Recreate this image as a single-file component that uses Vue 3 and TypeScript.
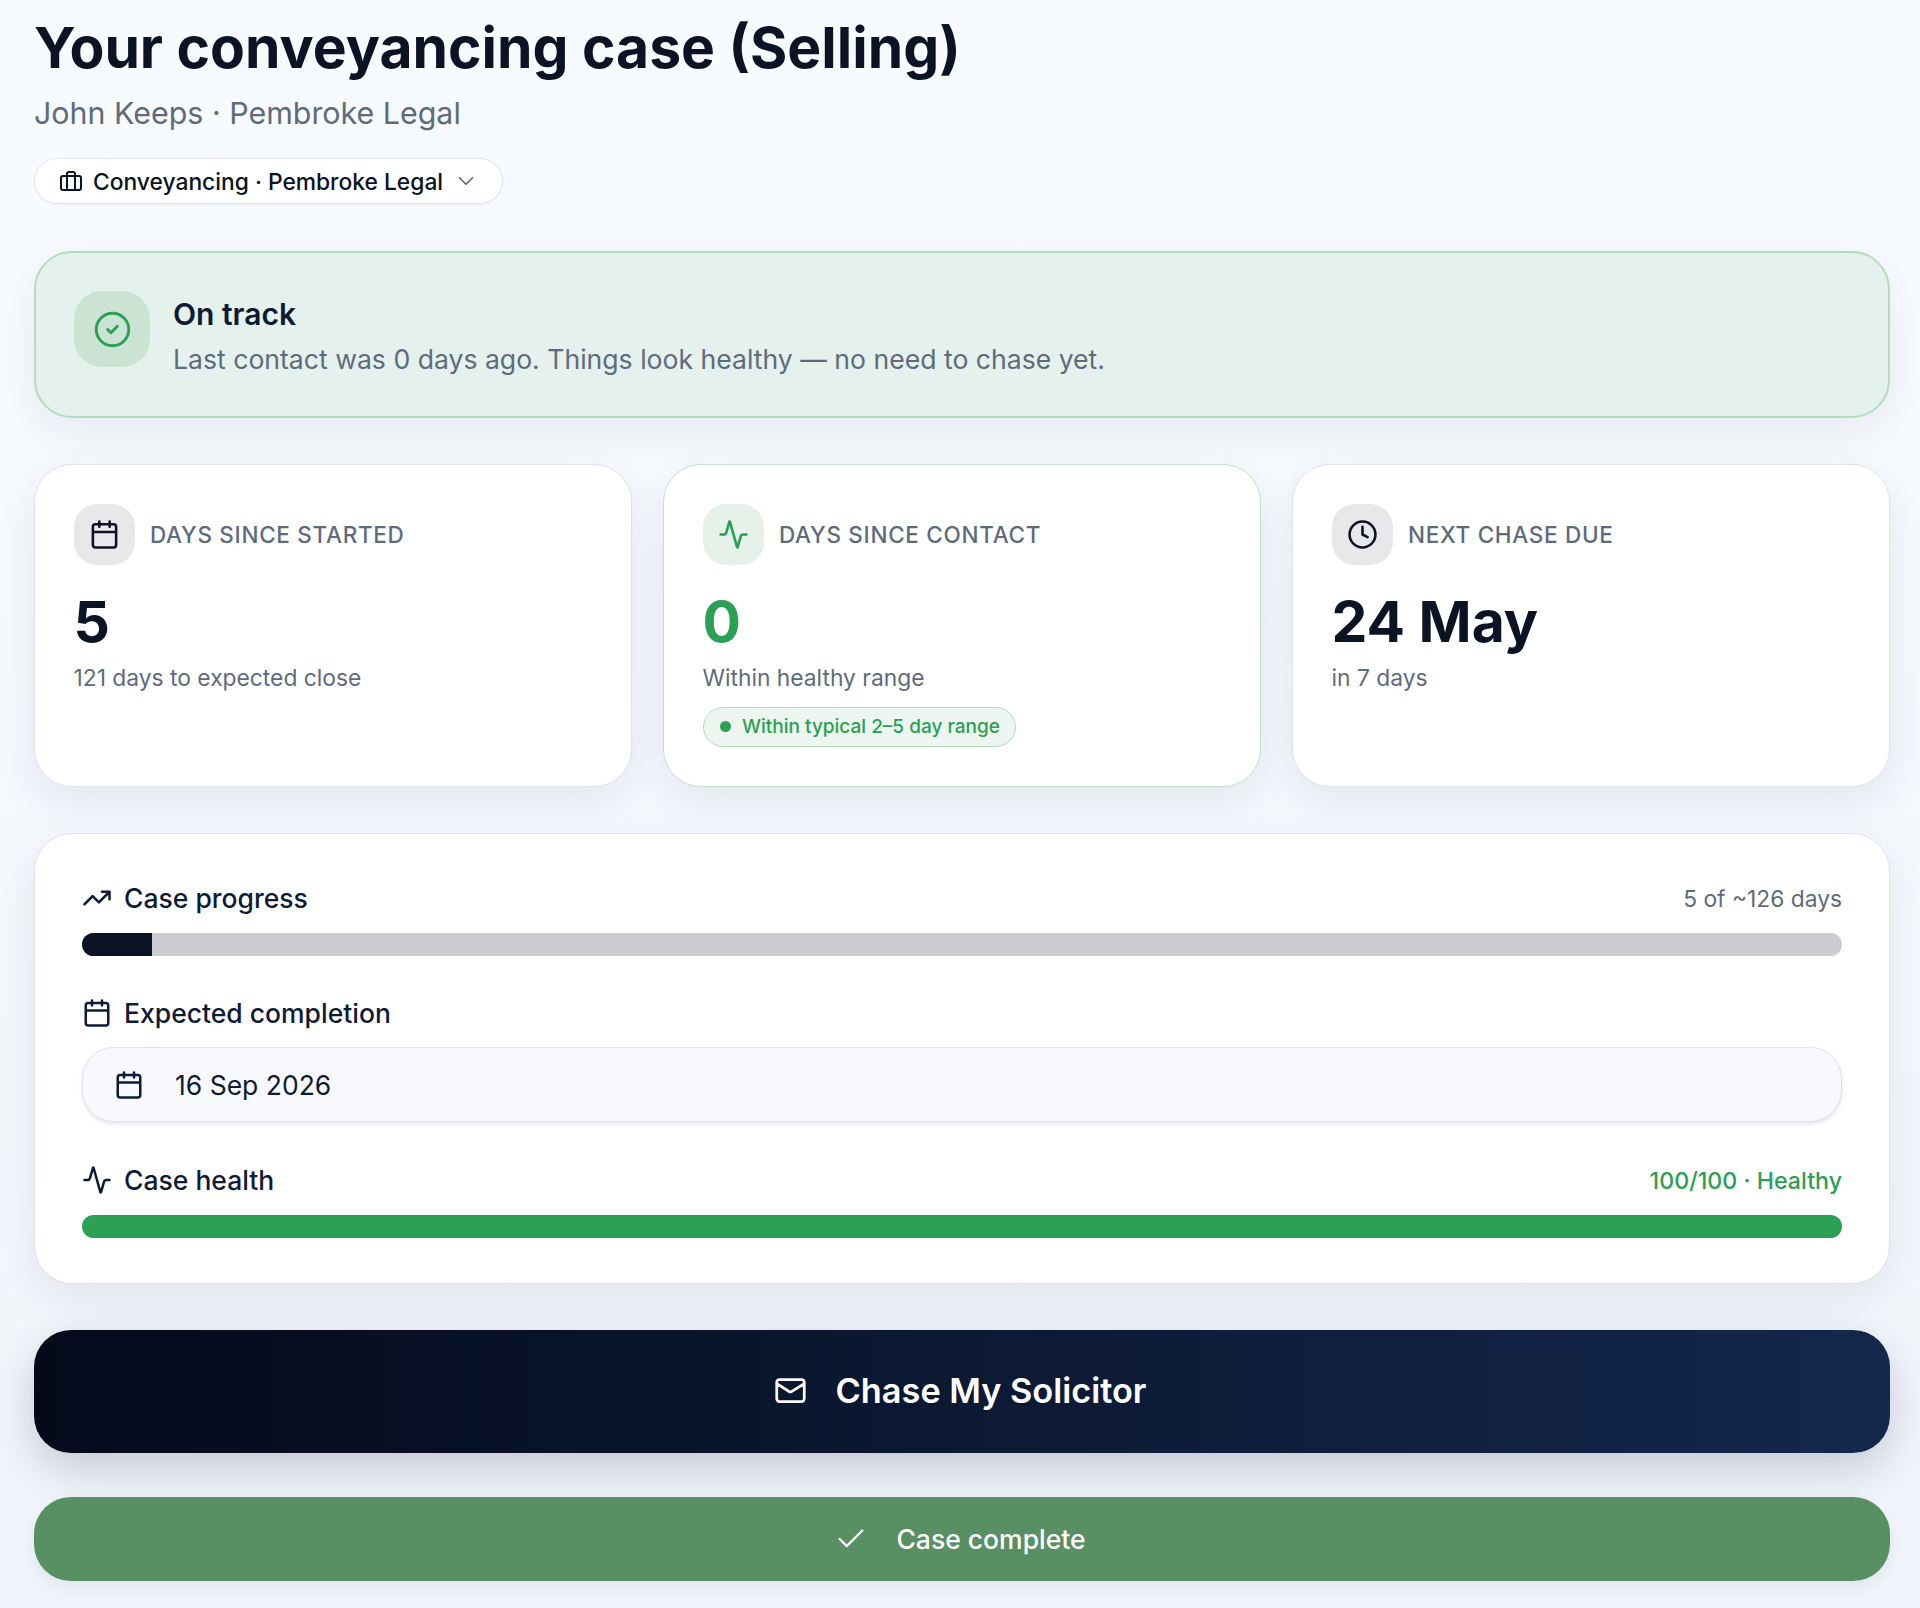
<template>
  <main class="page">
    <header class="head">
      <h1>Your conveyancing case (Selling)</h1>
      <p class="sub">John Keeps · Pembroke Legal</p>
      <button class="chip">
        <svg class="ico chip-ico" viewBox="0 0 24 24"><path :d="icons.briefcase" /></svg>
        <span>Conveyancing · Pembroke Legal</span>
        <svg class="ico chev" viewBox="0 0 24 24"><path :d="icons.chevron" /></svg>
      </button>
    </header>

    <section class="banner">
      <div class="banner-ico">
        <svg class="ico" viewBox="0 0 24 24"><path :d="icons.circleCheck" /></svg>
      </div>
      <div class="banner-body">
        <div class="banner-title">On track</div>
        <div class="banner-text">Last contact was 0 days ago. Things look healthy — no need to chase yet.</div>
      </div>
    </section>

    <section class="cards">
      <div v-for="card in cards" :key="card.label" class="card" :class="{ good: card.good }">
        <div class="card-top">
          <div class="card-ico">
            <svg class="ico" viewBox="0 0 24 24"><path :d="card.icon" /></svg>
          </div>
          <span class="card-label">{{ card.label }}</span>
        </div>
        <div class="card-value">{{ card.value }}</div>
        <div class="card-sub">{{ card.sub }}</div>
        <div v-if="card.pill" class="pill"><i class="dot"></i>{{ card.pill }}</div>
      </div>
    </section>

    <section class="panel">
      <div class="row">
        <span class="row-title"><svg class="ico" viewBox="0 0 24 24"><path :d="icons.trending" /></svg>Case progress</span>
        <span class="row-note">5 of ~126 days</span>
      </div>
      <div class="bar"><div class="bar-fill" :style="{ width: progress + '%' }"></div></div>

      <div class="row row-gap">
        <span class="row-title"><svg class="ico" viewBox="0 0 24 24"><path :d="icons.calendar" /></svg>Expected completion</span>
      </div>
      <div class="date">
        <svg class="ico" viewBox="0 0 24 24"><path :d="icons.calendar" /></svg>
        <span>16 Sep 2026</span>
      </div>

      <div class="row row-gap2">
        <span class="row-title"><svg class="ico" viewBox="0 0 24 24"><path :d="icons.activity" /></svg>Case health</span>
        <span class="row-note healthy">100/100 · Healthy</span>
      </div>
      <div class="bar"><div class="bar-fill green" style="width: 100%"></div></div>
    </section>

    <button class="btn-chase">
      <svg class="ico" viewBox="0 0 24 24"><path :d="icons.mail" /></svg>
      Chase My Solicitor
    </button>
    <button class="btn-done">
      <svg class="ico" viewBox="0 0 24 24"><path :d="icons.check" /></svg>
      Case complete
    </button>
  </main>
</template>

<script setup lang="ts">
const icons = {
  briefcase: 'M4 7h16a2 2 0 0 1 2 2v10a2 2 0 0 1-2 2H4a2 2 0 0 1-2-2V9a2 2 0 0 1 2-2zM16 21V5a2 2 0 0 0-2-2h-4a2 2 0 0 0-2 2v16',
  chevron: 'm6 9 6 6 6-6',
  circleCheck: 'M22 12a10 10 0 1 1-20 0 10 10 0 0 1 20 0zM9 12l2 2 4-4',
  calendar: 'M8 2v4M16 2v4M5 4h14a2 2 0 0 1 2 2v14a2 2 0 0 1-2 2H5a2 2 0 0 1-2-2V6a2 2 0 0 1 2-2zM3 10h18',
  activity: 'M22 12h-2.48a2 2 0 0 0-1.93 1.46l-2.35 8.36a.25.25 0 0 1-.48 0L9.24 2.18a.25.25 0 0 0-.48 0l-2.35 8.36A2 2 0 0 1 4.49 12H2',
  clock: 'M22 12a10 10 0 1 1-20 0 10 10 0 0 1 20 0zM12 6v6l4 2',
  trending: 'M22 7l-8.5 8.5-5-5L2 17M16 7h6v6',
  mail: 'M4 4h16a2 2 0 0 1 2 2v12a2 2 0 0 1-2 2H4a2 2 0 0 1-2-2V6a2 2 0 0 1 2-2zM22 7l-8.97 5.7a1.94 1.94 0 0 1-2.06 0L2 7',
  check: 'M20 6 9 17l-5-5',
}

const progress = 4

const cards = [
  { label: 'DAYS SINCE STARTED', value: '5', sub: '121 days to expected close', icon: icons.calendar, good: false, pill: '' },
  { label: 'DAYS SINCE CONTACT', value: '0', sub: 'Within healthy range', icon: icons.activity, good: true, pill: 'Within typical 2–5 day range' },
  { label: 'NEXT CHASE DUE', value: '24 May', sub: 'in 7 days', icon: icons.clock, good: false, pill: '' },
]
</script>

<style scoped>
.page {
  box-sizing: border-box;
  width: 1920px;
  height: 1608px;
  padding: 15px 30px 0 34px;
  display: flex;
  flex-direction: column;
  font-family: Inter, "Liberation Sans", sans-serif;
  color: #0b1325;
  background: linear-gradient(180deg, #f8fbfe 0%, #f1f4fa 100%);
}

.ico {
  fill: none;
  stroke: currentColor;
  stroke-width: 2;
  stroke-linecap: round;
  stroke-linejoin: round;
  flex: none;
}

.head h1 {
  margin: 0;
  font-size: 57px;
  line-height: 66px;
  font-weight: 700;
}
.sub {
  margin: 12px 0 0;
  font-size: 30.4px;
  line-height: 40px;
  color: #5f6b7d;
}
.chip {
  box-sizing: border-box;
  margin-top: 25px;
  height: 46px;
  width: 469px;
  padding: 0 24px;
  display: flex;
  align-items: center;
  border: 1.5px solid #e1e5ec;
  border-radius: 23px;
  background: #fff;
  box-shadow: 0 1px 2px rgba(20, 30, 60, 0.05);
  font-family: inherit;
  font-size: 22.8px;
  font-weight: 500;
  color: #0b1325;
  white-space: nowrap;
}
.chip-ico { width: 24px; height: 24px; margin-right: 10px; }
.chev { width: 26px; height: 26px; margin-left: 10px; stroke-width: 1.6; color: #5f6b7d; }

.banner {
  box-sizing: border-box;
  margin-top: 47px;
  height: 167px;
  padding: 38px 38px 0;
  display: flex;
  align-items: flex-start;
  gap: 23px;
  border: 2px solid #b6dcbf;
  border-radius: 38px;
  background: #e5f1ec;
  box-shadow: 0 14px 40px rgba(30, 45, 80, 0.07);
}
.banner-ico {
  width: 76px;
  height: 76px;
  border-radius: 28px;
  background: #cae3d2;
  color: #2b9f54;
  display: flex;
  align-items: center;
  justify-content: center;
}
.banner-ico svg { width: 39px; height: 39px; stroke-width: 1.8; }
.banner-body { padding-top: 3px; }
.banner-title { font-size: 30px; line-height: 40px; font-weight: 600; color: #0f1b36; }
.banner-text { margin-top: 6px; font-size: 26.6px; line-height: 38px; color: #5f6b7d; }

.cards {
  margin-top: 46px;
  display: grid;
  grid-template-columns: repeat(3, 1fr);
  gap: 31px;
}
.card {
  box-sizing: border-box;
  height: 323px;
  padding: 38.5px;
  border: 1.5px solid #dfe3ec;
  border-radius: 38px;
  background: #fff;
  box-shadow: 0 14px 40px rgba(30, 45, 80, 0.08);
}
.card.good { border-color: #c3e2ca; }
.card-top { display: flex; align-items: center; gap: 15.5px; }
.card-ico {
  width: 61px;
  height: 61px;
  border-radius: 23px;
  background: #e8e8eb;
  display: flex;
  align-items: center;
  justify-content: center;
}
.card-ico svg { width: 31px; height: 31px; }
.good .card-ico { background: #e5f1e9; color: #2b9f54; }
.card-label {
  font-size: 22.5px;
  font-weight: 500;
  letter-spacing: 0.7px;
  color: #5f6b7d;
}
.card-value {
  margin-top: 23px;
  font-size: 57px;
  line-height: 68px;
  font-weight: 700;
}
.good .card-value { color: #2b9f54; }
.card-sub { margin-top: 5px; font-size: 22.8px; line-height: 34px; color: #5f6b7d; }
.pill {
  margin-top: 12px;
  box-sizing: border-box;
  height: 40px;
  width: fit-content;
  padding: 0 15px 0 16px;
  display: flex;
  align-items: center;
  gap: 11.5px;
  border: 1.5px solid #b6dcbf;
  border-radius: 20px;
  background: #ecf5ef;
  color: #2b9f54;
  font-size: 19px;
  font-weight: 500;
}
.dot { width: 11px; height: 11px; border-radius: 50%; background: #2b9f54; }

.panel {
  box-sizing: border-box;
  margin-top: 46px;
  height: 451px;
  padding: 43px 47px 0 47px;
  border: 1.5px solid #dfe3ec;
  border-radius: 38px;
  background: #fff;
  box-shadow: 0 14px 40px rgba(30, 45, 80, 0.08);
}
.row {
  height: 42px;
  display: flex;
  align-items: center;
  justify-content: space-between;
}
.row-gap { margin-top: 36px; }
.row-gap2 { margin-top: 37px; }
.row-title {
  display: flex;
  align-items: center;
  gap: 12px;
  font-size: 26.5px;
  font-weight: 500;
  color: #0f1b36;
}
.row-title svg { width: 30px; height: 30px; }
.row-note { font-size: 22.8px; color: #5f6b7d; }
.healthy { padding-top: 2px; font-size: 23.2px; color: #2b9f54; font-weight: 500; }
.bar {
  margin-top: 14px;
  height: 23px;
  border-radius: 12px;
  overflow: hidden;
  background: #cbccd0;
}
.bar-fill { height: 100%; background: #0b1325; }
.bar-fill.green { background: #2ca054; }
.date {
  box-sizing: border-box;
  margin-top: 13px;
  height: 75px;
  padding: 0 31px;
  display: flex;
  align-items: center;
  gap: 31px;
  border: 1.5px solid #dfe3ec;
  border-radius: 32px;
  background: #f8f9fd;
  box-shadow: 0 2px 4px rgba(30, 45, 80, 0.12);
  font-size: 26.5px;
  color: #0f1b36;
}
.date svg { width: 30px; height: 30px; }

.btn-chase,
.btn-done {
  border: none;
  display: flex;
  align-items: center;
  justify-content: center;
  color: #fff;
  font-family: inherit;
  border-radius: 37px;
}
.btn-chase {
  margin-top: 46px;
  height: 123px;
  padding: 0 4px 3px 0;
  gap: 29px;
  font-size: 34.3px;
  font-weight: 600;
  background: linear-gradient(90deg, #040a1a 0%, #14284c 100%);
  box-shadow: 0 16px 44px rgba(20, 30, 60, 0.2);
}
.btn-chase svg { width: 33px; height: 33px; }
.btn-done {
  margin-top: 44px;
  height: 84px;
  padding: 0 4px 0 0;
  gap: 28px;
  font-size: 26.5px;
  font-weight: 500;
  background: #588f63;
  box-shadow: 0 6px 16px rgba(30, 45, 80, 0.08);
}
.btn-done svg { width: 34px; height: 34px; stroke-width: 1.6; }
</style>

<style>
html, body { background: #f5f8fc; }
</style>
